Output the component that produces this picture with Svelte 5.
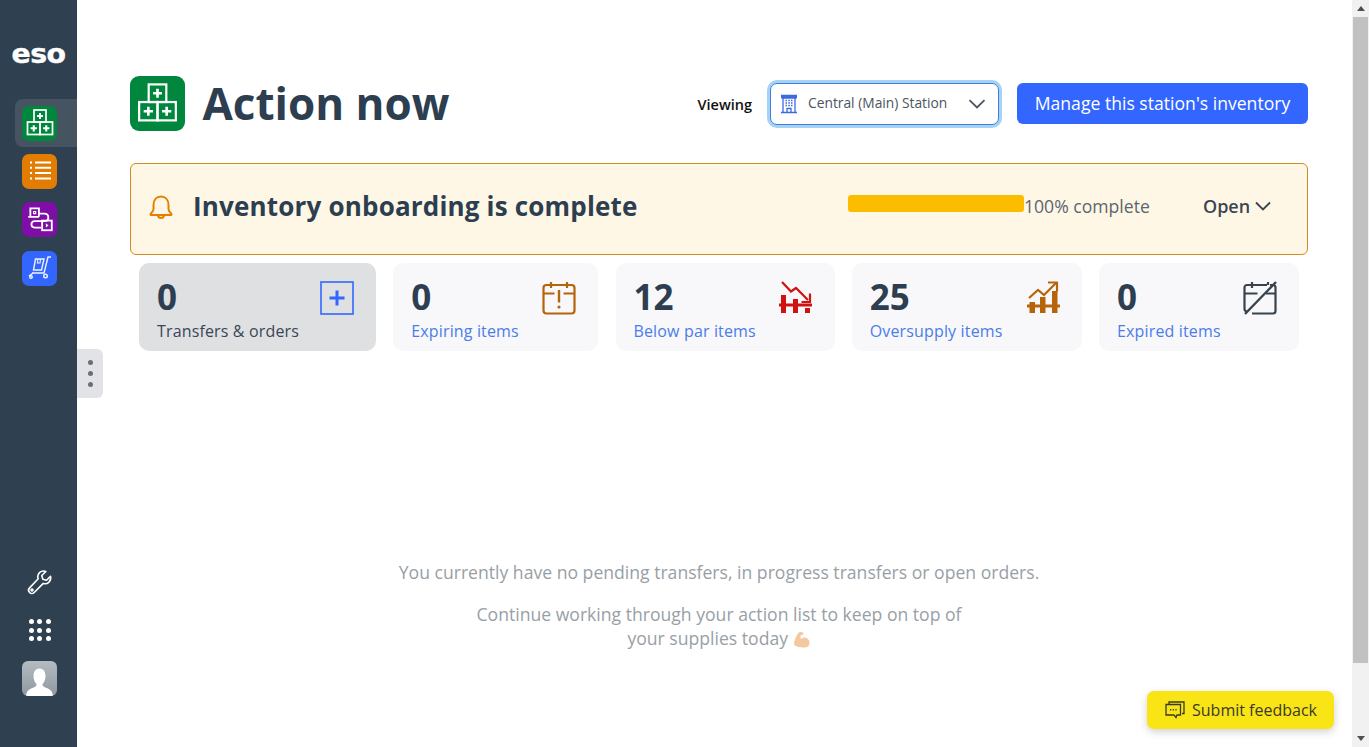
<script>
	const cards = [
		{ count: 0, label: 'Transfers & orders', icon: 'plus', selected: true, width: 237 },
		{ count: 0, label: 'Expiring items', icon: 'expiring', width: 205 },
		{ count: 12, label: 'Below par items', icon: 'below', width: 219 },
		{ count: 25, label: 'Oversupply items', icon: 'over', width: 230 },
		{ count: 0, label: 'Expired items', icon: 'expired', width: 200 }
	];
</script>

{#snippet boxes(size, weight)}
	<svg width={size} height={size} viewBox="0 0 32 32" fill="none" stroke="#fff" stroke-width={weight}>
		<rect x="10" y="3" width="12" height="12" />
		<rect x="3.5" y="15" width="12.500" height="12.500" />
		<rect x="16" y="15" width="12.500" height="12.500" />
		<path d="M16 6v6M13 9h6M9.750 18.200v6.200M6.600 21.300h6.300M22.250 18.200v6.200M19.100 21.300h6.300" stroke-width={weight + 0.3} />
	</svg>
{/snippet}

<div class="page">
	<nav class="sidebar">
		<div class="logo">eso</div>
		<div class="nav-top">
			<div class="nav-item active">
				<span class="tile green">{@render boxes(32, 1.7)}</span>
			</div>
			<div class="nav-item">
				<span class="tile orange">
					<svg width="28" height="28" viewBox="0 0 28 28" fill="none" stroke="#fff" stroke-width="2">
						<path d="M9 5.500h16M9 10.800h16M9 16.100h16M9 21.400h16" />
						<path d="M4 5.500h2M4 10.800h2M4 16.100h2M4 21.400h2" />
					</svg>
				</span>
			</div>
			<div class="nav-item">
				<span class="tile purple">
					<svg width="30" height="30" viewBox="0 0 28 28" fill="none" stroke="#fff" stroke-width="1.700">
						<path d="M5 12V4h8v8" />
						<path d="M8 7h2v2H8z" stroke-width="1" />
						<path d="M3 12h10M13 9h5c5 0 5 7 0 7H9c-4 0-4 6 0 6h6" />
						<rect x="16" y="15.500" width="9" height="9" />
						<path d="M19.500 18v4l2.500-2z" fill="#fff" stroke="none" />
					</svg>
				</span>
			</div>
			<div class="nav-item last">
				<span class="tile blue">
					<svg width="28" height="28" viewBox="0 0 28 28" fill="none" stroke="#eef2ff" stroke-width="1.400">
						<path d="M25 3h-3l-4 16H6" />
						<path d="M9.500 5h8.500l-2.500 11H7.500z" />
						<path d="M12 5l-.6 4h2.600l.6-4" stroke-width="1.100" />
						<path d="M3 22l4-3" />
						<circle cx="5" cy="23" r="1.300" />
						<circle cx="19.500" cy="22" r="1.800" />
					</svg>
				</span>
			</div>
		</div>
		<div class="nav-bottom">
			<svg width="28" height="28" viewBox="0 0 28 28" fill="none" stroke="#fff" stroke-width="1.600" stroke-linejoin="round">
				<path d="M24.500 7.200l-4 4-3.700-1-1-3.700 4-4c-3-1-6.300 .2-7.500 2.800-.7 1.500-.7 3.100-.1 4.500L3.600 18.900c-1.300 1.300-1.300 3.300 0 4.600s3.300 1.300 4.600 0l9.100-9.100c3.800 1.300 8.400-1.900 7.200-7.200z" />
				<circle cx="6" cy="21" r="1" />
			</svg>
			<div class="dots">
				{#each Array(9) as _}
					<i></i>
				{/each}
			</div>
			<span class="avatar">
				<svg width="35" height="35" viewBox="0 0 35 35">
					<path d="M4 35c.5-5 3-7 7-8.300 2.500-.8 3.700-2 3.500-3.700-2-2-3-4.500-3-8 0-4.500 2.300-7.500 6-7.500s6 3 6 7.500c0 3.500-1 6-3 8-.2 1.700 1 2.900 3.500 3.700 4 1.300 6.500 3.300 7 8.300z" fill="#fff" />
				</svg>
			</span>
		</div>
	</nav>

	<div class="handle"><i></i><i></i><i></i></div>

	<main class="content">
		<header class="top">
			<span class="title-icon">{@render boxes(47, 1.5)}</span>
			<h1>Action now</h1>
			<span class="viewing">Viewing</span>
			<div class="station">
				<svg width="18" height="20" viewBox="0 0 18 20" fill="none" stroke="#3d6ae0" stroke-width="1.300">
					<path d="M1 1.500h16M1.500 4h15M3 4v14M15 4v14M1 18.500h16" />
					<path d="M1 1h16v3H1z" fill="#3d6ae0" stroke="none" />
					<path d="M5.500 6.500h1.500M8.300 6.500h1.500M11 6.500h1.500M5.500 9h1.500M8.300 9h1.500M11 9h1.500M5.500 11.500h1.500M8.300 11.500h1.500M11 11.500h1.500" />
					<path d="M7 18v-3.500h4V18" />
				</svg>
				<span class="station-name">Central (Main) Station</span>
				<svg width="18" height="10" viewBox="0 0 18 10" fill="none" stroke="#4a5560" stroke-width="1.800">
					<path d="M1.500 1.200L9 8.500l7.500-7.300" />
				</svg>
			</div>
			<button class="manage">Manage this station's inventory</button>
		</header>

		<section class="banner">
			<svg class="bell" width="26" height="26" viewBox="0 0 26 26" fill="none" stroke="#e67e00" stroke-width="2" stroke-linejoin="round">
				<path d="M2.500 20.500c0-1.500 3-2.500 3-5.500v-4c0-5 3-8.500 7.500-8.500s7.500 3.500 7.500 8.500v4c0 3 3 4 3 5.500 0 .4-.3.600-.7.600H3.200c-.4 0-.7-.2-.7-.6z" />
				<path d="M10 21.500c.3 1.600 1.500 2.500 3 2.500s2.700-.9 3-2.500" />
			</svg>
			<h2>Inventory onboarding is complete</h2>
			<div class="progress"></div>
			<span class="percent">100% complete</span>
			<span class="open">
				Open
				<svg width="16" height="10" viewBox="0 0 16 10" fill="none" stroke="#3c4650" stroke-width="1.900">
					<path d="M1 1.500l7 7 7-7" />
				</svg>
			</span>
		</section>

		<section class="cards">
			{#each cards as card}
				<div class="card" class:selected={card.selected} style="width: {card.width}px">
					<div class="card-text">
						<span class="count">{card.count}</span>
						<span class="label">{card.label}</span>
					</div>
					{#if card.icon === 'plus'}
						<svg width="34" height="34" viewBox="0 0 34 34" fill="none" stroke="#3366ff">
							<rect x="1" y="1" width="32" height="32" stroke-width="1.600" />
							<path d="M17 9.500v15M9.500 17h15" stroke-width="3" />
						</svg>
					{:else if card.icon === 'expiring'}
						<svg width="34" height="34" viewBox="0 0 34 34" fill="none" stroke="#b5640a" stroke-width="2.200">
							<rect x="1.500" y="4" width="31" height="28.500" rx="3" />
							<path d="M1.500 12.500h11M21.500 12.500h11M9 1v6M25 1v6" />
							<path d="M17 9v12.500" stroke-width="2.400" />
							<circle cx="17" cy="26" r="1.600" fill="#b5640a" stroke="none" />
						</svg>
					{:else if card.icon === 'below'}
						<svg width="34" height="34" viewBox="0 0 34 34" fill="none" stroke="#d01212" stroke-width="2.200">
							<path d="M3 1l9 9.500 5-3.500 12 12" />
							<path d="M31 12.500v8.500h-8.500" />
							<path d="M0 24h33" stroke-width="2.800" />
							<path d="M2 14h5v18H2zM14 18h5v14h-5zM26 27h5v5h-5z" fill="#d01212" stroke="none" />
						</svg>
					{:else if card.icon === 'over'}
						<svg width="34" height="34" viewBox="0 0 34 34" fill="none" stroke="#b5640a" stroke-width="2.200">
							<path d="M3 17l9-8 6 5L30 2" />
							<path d="M22 1.500h9v9" />
							<path d="M1 25h33" stroke-width="2.800" />
							<path d="M3.500 21h5.500v11H3.500zM14 16h5.500v16H14zM26 10h5.500v22H26z" fill="#b5640a" stroke="none" />
						</svg>
					{:else}
						<svg width="34" height="34" viewBox="0 0 34 34" fill="none" stroke="#36444f" stroke-width="2.200">
							<path d="M27 4h3c1.500 0 2.500 1 2.500 2.500V30c0 1.500-1 2.500-2.500 2.500H9M4 30.500c-1.500 0-2.500-1-2.500-2.500V6.500C1.500 5 2.500 4 4 4h20" />
							<path d="M1.500 12.500h13M23 12.500h9.500M9 1v6M25 1v3" />
							<path d="M33 1L2 33" stroke-width="2.400" />
						</svg>
					{/if}
				</div>
			{/each}
		</section>

		<section class="empty">
			<p>You currently have no pending transfers, in progress transfers or open orders.</p>
			<p>Continue working through your action list to keep on top of<br />your supplies today <svg class="arm" width="18" height="18" viewBox="0 0 18 18"><path d="M6 1.500c2-1 4 0 4.500 1 .3 1-1 1.500-2.500 1.500-.5 1.500-.5 3 0 4 2-2 5-2 7 0 2 2 2 5 .5 7-2 1.800-6 1.800-10 1-3-.7-5-2-4.500-4C2 9 3 4 6 1.500z" fill="#f3c9a0" /></svg></p>
		</section>
	</main>

	<div class="scrollbar">
		<span class="arrow up"></span>
		<div class="track"><div class="thumb"></div></div>
		<span class="arrow down"></span>
	</div>

	<button class="feedback">
		<svg width="20" height="18" viewBox="0 0 20 18" fill="none" stroke="#3a3a2a" stroke-width="1.300">
			<path d="M4 3V1h15v11.500h-2" />
			<path d="M1 3.500h14.500v10.500H12l-1 2.500-2-2.500H1z" />
			<path d="M5 8.800h1.200M7.700 8.800h1.200M10.400 8.800h1.200" stroke-width="1.600" />
		</svg>
		Submit feedback
	</button>
</div>

<style>
	:global(body) {
		margin: 0;
		overflow: hidden;
		background: #fff;
	}

	.page {
		display: flex;
		height: 747px;
		font-family: 'Open Sans', 'Noto Sans', sans-serif;
		color: #2c3e50;
		position: relative;
		overflow: hidden;
	}

	.sidebar {
		width: 77px;
		flex: none;
		background: #2f4050;
		display: flex;
		flex-direction: column;
	}

	.logo {
		margin-top: 34px;
		height: 40px;
		width: 77px;
		text-align: center;
		color: #fff;
		font-family: 'DejaVu Sans', sans-serif;
		font-weight: 700;
		font-size: 27px;
		line-height: 40px;
		letter-spacing: -0.5px;
		transform: scaleX(1.05);
		-webkit-text-stroke: 0.4px #fff;
	}

	.nav-top {
		margin-top: 25px;
		display: flex;
		flex-direction: column;
	}

	.nav-item {
		height: 48px;
		margin-left: 15px;
		padding-left: 7px;
		display: flex;
		align-items: center;
	}

	.nav-item.active {
		background: #465462;
		border-radius: 8px 0 0 8px;
	}

	.nav-item.last {
		margin-top: 1px;
	}

	.tile {
		width: 35px;
		height: 35px;
		border-radius: 7px;
		display: flex;
		align-items: center;
		justify-content: center;
	}

	.green { background: #00873d; }
	.orange { background: #e27c03; }
	.purple { background: #7e0ea6; }
	.blue { background: #3366ff; }

	.nav-bottom {
		margin-top: auto;
		padding-bottom: 51px;
		padding-left: 22px;
		display: flex;
		flex-direction: column;
		align-items: center;
		width: 35px;
	}

	.dots {
		margin-top: 22px;
		display: grid;
		grid-template-columns: repeat(3, 5px);
		gap: 3.500px;
		justify-content: center;
	}

	.dots i {
		width: 5px;
		height: 5px;
		border-radius: 50%;
		background: #fff;
	}

	.avatar {
		margin-top: 20px;
		width: 35px;
		height: 35px;
		border-radius: 6px;
		overflow: hidden;
		background: linear-gradient(#b4bcc2, #8e989f);
		display: block;
	}

	.avatar svg {
		display: block;
	}

	.handle {
		position: absolute;
		left: 77px;
		top: 349px;
		width: 26px;
		height: 49px;
		background: #e1e3e6;
		border-radius: 0 6px 6px 0;
		display: flex;
		flex-direction: column;
		align-items: center;
		justify-content: center;
		gap: 6px;
	}

	.handle i {
		width: 5px;
		height: 5px;
		border-radius: 50%;
		background: #666f7a;
	}

	.content {
		flex: 1;
		padding: 76px 44px 0 53px;
		min-width: 0;
	}

	.top {
		display: flex;
		align-items: center;
		height: 55px;
	}

	.title-icon {
		width: 55px;
		height: 55px;
		border-radius: 9px;
		background: #00873d;
		display: flex;
		align-items: center;
		justify-content: center;
		flex: none;
	}

	h1 {
		margin: 0 0 0 17.500px;
		font-size: 44px;
		font-weight: 700;
		line-height: 55px;
		flex: 1;
		color: #2c3e50;
	}

	.viewing {
		font-size: 14.500px;
		font-weight: 600;
		color: #111;
		margin-right: 18px;
		margin-top: 2px;
	}

	.station {
		width: 206px;
		height: 40px;
		border: 1px solid #3d7fe0;
		border-radius: 7px;
		box-shadow: 0 0 0 3px #a6d2f5;
		display: flex;
		align-items: center;
		padding: 0 12px 0 9px;
		margin-right: 18px;
		background: #fff;
	}

	.station-name {
		flex: 1;
		margin: -3px 0 0 10px;
		font-size: 13.800px;
		font-weight: 500;
		color: #4a5560;
		white-space: nowrap;
	}

	.manage {
		width: 291px;
		height: 41px;
		border: 0;
		border-radius: 6px;
		background: #3366ff;
		color: #fff;
		font-family: inherit;
		font-size: 17.600px;
		padding: 0 0 2px;
		white-space: nowrap;
		flex: none;
	}

	.banner {
		margin-top: 32px;
		height: 92px;
		box-sizing: border-box;
		border: 1px solid #cf8c22;
		border-radius: 6px;
		background: #fff7e6;
		display: flex;
		align-items: center;
		padding: 0 0 6px 17px;
	}

	.bell {
		flex: none;
		margin-top: 2px;
	}

	.banner h2 {
		margin: 0 0 0 19px;
		font-size: 26px;
		letter-spacing: 0.18px;
		font-weight: 700;
		width: 655px;
		white-space: nowrap;
		color: #2c3e50;
	}

	.progress {
		width: 176px;
		height: 17px;
		border-radius: 3px;
		background: #fcbc00;
		margin-top: -6px;
		flex: none;
	}

	.percent {
		font-size: 17.600px;
		color: #5b6670;
		width: 179px;
		white-space: nowrap;
	}

	.open {
		font-size: 18px;
		font-weight: 600;
		color: #3c4650;
		display: flex;
		align-items: center;
		gap: 5px;
	}

	.cards {
		display: flex;
		justify-content: space-between;
		margin-top: 8px;
		padding: 0 9px;
	}

	.card {
		height: 88px;
		box-sizing: border-box;
		border-radius: 10px;
		background: #f8f8fb;
		padding: 15px 22px 0 18px;
		display: flex;
		justify-content: space-between;
		align-items: flex-start;
	}

	.card.selected {
		background: #dfe0e2;
	}

	.card svg {
		margin-top: 3px;
		flex: none;
	}

	.card-text {
		display: flex;
		flex-direction: column;
	}

	.count {
		font-size: 35px;
		font-weight: 700;
		line-height: 38px;
		margin-bottom: 2px;
		color: #2c3e50;
	}

	.label {
		font-size: 16px;
		letter-spacing: 0.15px;
		line-height: 26px;
		color: #4a7de8;
		font-weight: 500;
		white-space: nowrap;
	}

	.selected .label {
		color: #3a4658;
	}

	.empty {
		margin-top: 209px;
		text-align: center;
		font-size: 17.600px;
		line-height: 24px;
		color: #98a0a6;
	}

	.empty p {
		margin: 0 0 18px;
	}

	.arm {
		vertical-align: -4px;
	}

	.scrollbar {
		width: 17px;
		flex: none;
		background: #f1f1f1;
		display: flex;
		flex-direction: column;
		align-items: center;
	}

	.track {
		flex: 1;
		width: 100%;
	}

	.thumb {
		height: 646px;
		background: #c1c1c1;
		width: 15px;
		margin-left: 1px;
	}

	.arrow {
		height: 17px;
		width: 17px;
		display: flex;
		align-items: center;
		justify-content: center;
		flex: none;
	}

	.arrow::before {
		content: '';
		border-left: 4px solid transparent;
		border-right: 4px solid transparent;
	}

	.up::before {
		border-bottom: 5px solid #505050;
	}

	.down::before {
		border-top: 5px solid #505050;
	}

	.feedback {
		position: absolute;
		left: 1147px;
		top: 691px;
		width: 187px;
		height: 38px;
		border: 0;
		border-radius: 7px;
		background: #f9e416;
		box-shadow: 0 3px 8px rgba(0, 0, 0, 0.18);
		font-family: inherit;
		font-size: 16px;
		font-weight: 500;
		color: #3a3a2a;
		display: flex;
		align-items: center;
		justify-content: center;
		gap: 7px;
		padding: 0 0 0 1px;
	}
</style>
